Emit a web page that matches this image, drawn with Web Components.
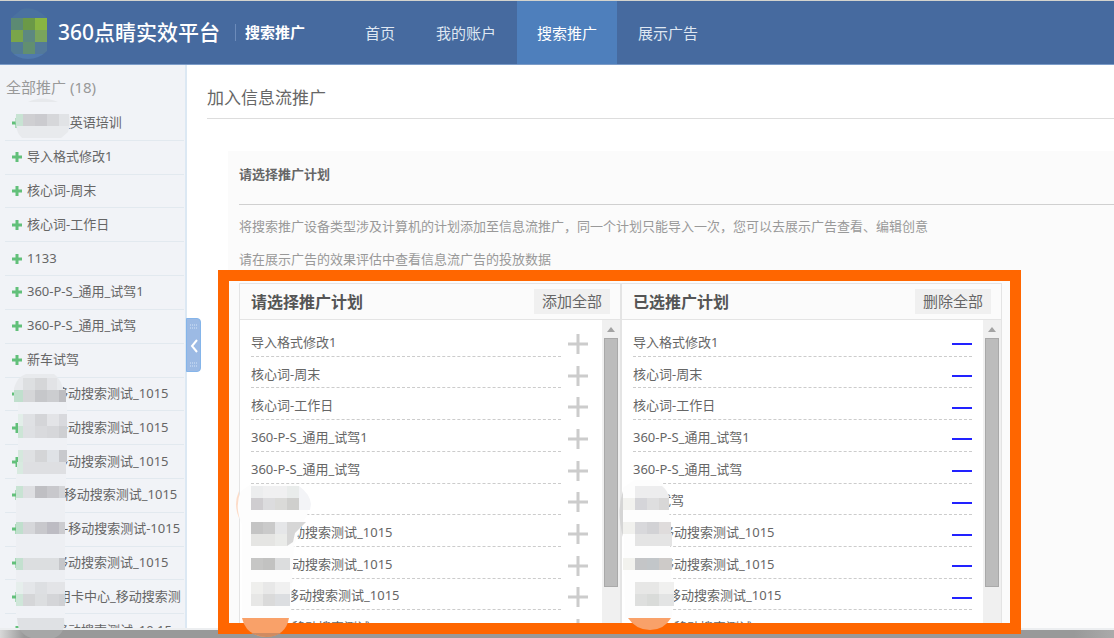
<!DOCTYPE html>
<html lang="zh-CN">
<head>
<meta charset="utf-8">
<title>360点睛实效平台</title>
<style>
html, body { margin: 0; height: 100%; }
body { font: 13px/20px "Noto Sans", "Noto Sans CJK SC", sans-serif; color: #666; overflow: hidden; }
</style>
</head>
<body>
<app-page>
  <top-bar slot="header">
    <nav-item>首页</nav-item>
    <nav-item>我的账户</nav-item>
    <nav-item active>搜索推广</nav-item>
    <nav-item>展示广告</nav-item>
  </top-bar>
  <side-bar slot="side" heading="全部推广 (18)">
    <plan-link style="--masked:37px">_英语培训</plan-link>
    <plan-link>导入格式修改1</plan-link>
    <plan-link>核心词-周末</plan-link>
    <plan-link>核心词-工作日</plan-link>
    <plan-link>1133</plan-link>
    <plan-link>360-P-S_通用_试驾1</plan-link>
    <plan-link>360-P-S_通用_试驾</plan-link>
    <plan-link>新车试驾</plan-link>
    <plan-link style="--masked:28px">移动搜索测试_1015</plan-link>
    <plan-link style="--masked:28px">移动搜索测试_1015</plan-link>
    <plan-link style="--masked:28px">移动搜索测试_1015</plan-link>
    <plan-link style="--masked:31px">_移动搜索测试_1015</plan-link>
    <plan-link style="--masked:37px">-移动搜索测试-1015</plan-link>
    <plan-link style="--masked:28px">移动搜索测试_1015</plan-link>
    <plan-link style="--masked:31px">用卡中心_移动搜索测</plan-link>
    <plan-link style="--masked:28px">移动搜索测试_10 15</plan-link>
  </side-bar>
  <feed-form>
    <plan-pane heading="请选择推广计划" action="添加全部">
      <plan-row>导入格式修改1</plan-row>
      <plan-row>核心词-周末</plan-row>
      <plan-row>核心词-工作日</plan-row>
      <plan-row>360-P-S_通用_试驾1</plan-row>
      <plan-row>360-P-S_通用_试驾</plan-row>
      <plan-row></plan-row>
      <plan-row style="--masked:28px">移动搜索测试_1015</plan-row>
      <plan-row style="--masked:28px">移动搜索测试_1015</plan-row>
      <plan-row style="--masked:35px">移动搜索测试_1015</plan-row>
      <plan-row style="--masked:41px">移动搜索测试_1015</plan-row>
    </plan-pane>
    <plan-pane heading="已选推广计划" action="删除全部">
      <plan-row chosen>导入格式修改1</plan-row>
      <plan-row chosen>核心词-周末</plan-row>
      <plan-row chosen>核心词-工作日</plan-row>
      <plan-row chosen>360-P-S_通用_试驾1</plan-row>
      <plan-row chosen>360-P-S_通用_试驾</plan-row>
      <plan-row chosen style="--masked:25px">试驾</plan-row>
      <plan-row chosen style="--masked:28px">移动搜索测试_1015</plan-row>
      <plan-row chosen style="--masked:28px">移动搜索测试_1015</plan-row>
      <plan-row chosen style="--masked:35px">移动搜索测试_1015</plan-row>
      <plan-row chosen style="--masked:41px">移动搜索测试_1015</plan-row>
    </plan-pane>
  </feed-form>
</app-page>

<script>
const define = (name, render) => customElements.define(name, class extends HTMLElement {
  constructor() {
    super();
    this.attachShadow({ mode: "open" });
  }
  connectedCallback() {
    this.shadowRoot.innerHTML = render(this);
  }
});

// Each block is "x y w h colour"; the svg they land in uses CSS pixels.
const blocks = list => list.trim().split(/\s*;\s*/).filter(Boolean).map(b => {
  const [x, y, w, h, c] = b.split(" ");
  return `<rect x="${x}" y="${y}" width="${w}" height="${h}" fill="${c}"/>`;
}).join("");

define("app-page", () => `
<style>
:host { display: flex; flex-direction: column; height: 100vh; background: linear-gradient(90deg, #d8d8d8, #999 24px, #999 calc(100% - 40px), #aaa); }
.window { flex: 1; min-height: 0; display: flex; flex-direction: column; margin-bottom: 8px; border-bottom: 2px solid #eceef0; border-top: 1px solid #d3d3cd; box-sizing: border-box; background: #fff; }
.body { flex: 1; min-height: 0; display: flex; }
main { flex: 1; min-width: 0; }
</style>
<div class="window"><slot name="header"></slot>
<div class="body"><slot name="side"></slot><main><slot></slot></main></div></div>`);

define("top-bar", () => `
<style>
:host { display: flex; align-items: center; height: 63px; flex: none; background: #466a9f; border-bottom: 1px solid #7c9cc8; color: #fff; }
.logo { flex: none; width: 48px; height: 55px; margin-left: 5px; }
h1 { margin: 0; padding-left: 5px; font-size: 21px; line-height: 29px; font-weight: 500; width: 182px; box-sizing: border-box; white-space: nowrap; }
.product { font-size: 15px; font-weight: 700; border-left: 1px solid #6c8bba; padding-left: 9px; line-height: 17px; width: 110px; box-sizing: border-box; white-space: nowrap; }
nav { display: flex; gap: 1px; align-self: stretch; }
</style>
<svg class="logo" viewBox="5 5 48 55" aria-hidden="true">
<defs><clipPath id="c"><path d="M11 5h36v46q-8 8-19 8t-17-8z"/></clipPath></defs>
<path d="M22 9q13-3 24 8v34q-8 7-18 7t-17-7V18z" fill="#4a719f"/>
<g clip-path="url(#c)">${blocks(`11 18 12 12 #5c8a73;23 18 12 12 #6b9947;35 18 12 12 #88b542;11 30 12 12 #7aa54a;23 30 12 12 #5d8880;35 30 12 12 #7aa45c;11 42 12 12 #527b95;23 42 12 12 #628f70;35 42 12 12 #53799a;11 54 36 5 #5079ad`)}</g></svg>
<h1>360点睛实效平台</h1>
<div class="product">搜索推广</div>
<nav><slot></slot></nav>`);

define("nav-item", () => `
<style>
:host { display: flex; }
a { display: flex; align-items: center; padding: 0 20px; font-size: 15px; color: #dfe7f2; text-decoration: none; white-space: nowrap; }
:host([active]) a { background: #4e7fbc; color: #fff; }
</style><a href="#"><slot></slot></a>`);

define("side-bar", el => `
<style>
:host { display: block; position: relative; flex: none; width: 187px; box-sizing: border-box; background: #f1f3f7; border-right: 2px solid #dce8f3; }
.clip { height: 100%; overflow: hidden; }
h2 { margin: 0; padding: 11px 0 9px 6px; font-size: 15px; line-height: 22px; font-weight: 400; color: #999; }
nav { display: grid; grid-auto-rows: 1fr; height: 541px; margin: 0 1px 0 5px; }
.mask { position: absolute; left: 0; top: 0; width: 80px; height: 573px; pointer-events: none; z-index: 2; }
button { position: absolute; left: 186px; top: 253px; width: 15px; height: 54px; padding: 0; border: 1px solid #85b5ea; border-radius: 0 4px 4px 0; background: #9cbae4; z-index: 3; }
button svg { display: block; }
</style>
<div class="clip"><h2>${el.getAttribute("heading")}</h2><nav><slot></slot></nav></div>
<svg class="mask" viewBox="0 65 80 573" aria-hidden="true">
<path d="M28 102q14-7 30 0z" fill="#e7e9ec"/>
<path d="M16 114h53q2 10-1 18l-7 6H22q-8-7-6-24z" fill="#e8eaed"/>
${blocks(`16 114 7 12 #c8e3d3;23 114 12 12 #cfcfd2;35 114 12 12 #cbcbcf;47 114 12 12 #d6d7da;59 114 10 12 #e1e3e6`)}
<path d="M14 393v-5q4-12 12-14h28q8 6 10 19z" fill="#e8eaed"/>
${blocks(`23 378 12 12 #dddfe1;35 378 12 12 #d5d6d8;47 378 10 12 #e2e3e6;14 390 9 12 #c0dfcd;23 390 12 12 #d5d6d8;35 390 12 12 #c6c7ca;47 390 12 12 #cccdd0;59 390 7 12 #bdbdc1;18 402 49 12 #eff1f5;
18 414 5 12 #e2eee9;23 414 12 12 #dfe1e4;35 414 12 12 #d4d5d8;47 414 12 12 #e3e4e7;59 414 8 12 #d8d9dd;18 426 5 12 #cce5d6;23 426 12 12 #dee0e3;35 426 12 12 #d9dadd;47 426 12 12 #d6d7da;59 426 8 12 #cecfd2;18 438 49 12 #eff1f5;
18 450 5 12 #d5e8dd;23 450 12 12 #dfe1e3;35 450 12 12 #d4d5d7;47 450 12 12 #dfe2e6;59 450 8 12 #c8c9cd;17 462 6 12 #d8eae0;23 462 43 12 #dedfe2;16 474 50 12 #eff1f5;
16 486 7 12 #c8e3d3;23 486 12 12 #dedfe2;35 486 12 12 #bfbfc3;47 486 12 12 #c8c8cc;59 486 6 12 #d4d5d8;16 498 49 24 #edeff3;
16 522 7 12 #c0dfcd;23 522 12 12 #d6d7da;35 522 12 12 #c8c8cc;47 522 12 12 #bdbcc3;59 522 6 12 #ccccd0;16 534 49 24 #edeff3;
16 558 7 12 #c3e0cf;23 558 36 12 #dcdee0;59 558 6 12 #c5c6c9;16 570 49 12 #edeff3;
16 582 7 12 #e6eeec;23 582 12 12 #e4e6e9;35 582 12 12 #dddfe2;47 582 18 12 #e3e4e7;16 594 7 12 #cfe6d9;23 594 12 12 #d5d6d8;35 594 12 12 #dcdee0;47 594 12 12 #d4d5d8;59 594 6 12 #cfd0d3;16 606 49 12 #f0f2f6`)}
<path d="M17 618h47q1 7-1 12H20q-3-6-3-12z" fill="#dfe1e4"/><path d="M20 630h43q-3 6-9 8H31q-8-3-11-8z" fill="#a6a7a7"/></svg>
<button aria-label="收起"><svg width="13" height="52"><path d="M10 21L5 27l5 6" fill="none" stroke="#fff" stroke-width="2"/><path d="M3 6h8M3 9h8M3 44h8M3 47h8" stroke="#d6e5f8" stroke-dasharray="1 1"/></svg></button>`);

define("plan-link", () => `
<style>
:host { display: flex; align-items: center; min-height: 0; border-bottom: 1px solid #e2e9ef; overflow: hidden; }
a { display: flex; align-items: center; gap: 5px; padding-left: 7px; color: inherit; text-decoration: none; white-space: nowrap; line-height: 20px; }
svg { flex: none; }
span { padding-left: var(--masked, 0); padding-bottom: 2px; }
</style>
<a href="#"><svg width="10" height="10" aria-hidden="true"><path d="M5 0v10M0 5h10" stroke="#62c07a" stroke-width="3"/></svg><span><slot></slot></span></a>`);

define("feed-form", () => `
<style>
:host { display: flex; flex-direction: column; height: 100%; position: relative; overflow: visible; box-sizing: border-box; padding-left: 20px; }
h1 { flex: none; margin: 0 0 32px; padding: 20px 0 8px; font-size: 17px; line-height: 25px; font-weight: 400; border-bottom: 1px solid #ddd; }
section { flex: 1; min-height: 0; margin-left: 21px; padding-left: 11px; background: #fbfbfb; overflow: hidden; }
h2 { margin: 0 0 11px; padding: 13px 0 20px; font-size: 13px; line-height: 20px; font-weight: 700; border-bottom: 1px solid #d0d0d0; }
p { margin: 0 0 13px; color: #999; white-space: nowrap; line-height: 20px; }
p + p { margin-bottom: 14px; }
.picker { display: grid; grid-template-columns: 382fr 379fr; max-width: 763px; border: 1px solid #e4e4e4; box-sizing: border-box; }
.frame { position: absolute; left: 31px; top: 205px; width: 803px; height: 364px; box-sizing: border-box; border: 11px solid #f60; pointer-events: none; }
.mask { position: absolute; left: 43px; top: 410px; width: 460px; height: 163px; pointer-events: none; }
</style>
<h1>加入信息流推广</h1>
<section>
<h2>请选择推广计划</h2>
<p>将搜索推广设备类型涉及计算机的计划添加至信息流推广，同一个计划只能导入一次，您可以去展示广告查看、编辑创意</p>
<p>请在展示广告的效果评估中查看信息流广告的投放数据</p>
<div class="picker"><slot></slot></div>
</section>
<div class="frame"></div>
<svg class="mask" viewBox="230 475 460 163" aria-hidden="true">
<path d="M239 491q-6 13 0 27z" fill="#fddcc8"/>
<path d="M251 484h45q20 22 8 36l-10 25-4 73h-48V525q-8-19-1-34z" fill="#fdfdfd"/>
<path d="M299 486q11 8 12 18l-1 6h-11z" fill="#f3f4f7"/>
${blocks(`251 486 12 12 #ecedee;263 486 24 12 #f0f0f1;287 486 12 12 #e9eceb;251 498 12 12 #cfcdd0;263 498 12 12 #dcdcde;275 498 12 12 #dadad8;287 498 12 12 #cfcfcd;
251 522 12 12 #c4c4c4;263 522 12 12 #cacaca;275 522 12 12 #e5e6e8;251 534 24 12 #e5e5e3;275 534 12 12 #eaebe9;
251 558 12 12 #c6c6c5;263 558 12 12 #c2c2c1;275 558 15 12 #dcddde;251 582 12 12 #efefed;263 582 12 12 #e8e8e8;275 582 15 12 #f0f0f0;251 594 12 12 #e7e7e6;263 594 12 12 #dadada;275 594 15 12 #dcdee1`)}
<path d="M287 522h19l-11 11-2 9-6 4z" fill="#d6d6d6"/>
<path d="M242 618h47q-3 18-23 19-20-1-24-19z" fill="#f9a169"/><path d="M251 633h30q-14 8-30 0z" fill="#cf8b62"/>
<path d="M623 491q-7 20 0 46z" fill="#d5d5d5"/>
<path d="M635 480h22q10 6 12 20l3 118h-47l-2-130z" fill="#fdfdfd"/>
<path d="M635 486h27q6 5 7 12h-34z" fill="#ededee"/>
${blocks(`623 498 12 12 #f2f2ef;635 498 12 12 #d5d5d9;647 498 12 12 #dededf;659 498 10 12 #d8d7d7;623 522 12 12 #f1f1ee;635 522 12 12 #d8d8db;647 522 12 12 #d2d2d5;659 522 12 12 #dfdcdc;635 534 37 12 #e4e4e4;
623 558 12 12 #f2f2ee;635 558 12 12 #c4c5c7;647 558 12 12 #c2c6c9;659 558 13 12 #cdcac8;635 582 24 12 #e7e7e6;659 582 15 12 #f0f0ef;635 594 12 12 #dedfde;647 594 12 12 #d9dbd9;659 594 15 12 #e3e4e4`)}
<path d="M628 618h43q-7 12-21 12t-22-12z" fill="#f9a169"/>
</svg>`);

define("plan-pane", el => `
<style>
:host { display: block; min-width: 0; border-right: 2px solid #e4e4e4; }
:host(:last-of-type) { border-right: 0; }
header { display: flex; align-items: center; justify-content: space-between; height: 35px; padding: 0 10px 0 11px; border-bottom: 1px solid #e4e4e4; }
h3 { margin: 0; font-size: 16px; line-height: 24px; font-weight: 700; color: #555; }
button { border: 0; margin: 0; padding: 0 8px; height: 25px; background: #f0f0f0; font: inherit; font-size: 15px; line-height: 25px; color: #666; }
.body { display: flex; background: #fff; }
.rows { flex: 1; min-width: 0; display: grid; grid-auto-rows: 1fr; height: 317px; padding: 5px 11px; }
.bar { width: 14px; padding: 0 2px; background: #f0f0f0; display: flex; flex-direction: column; }
.bar svg { display: block; }
.thumb { height: 249px; background: #bcbcbc; border: 1px solid #a9a9a9; box-sizing: border-box; }
</style>
<header><h3>${el.getAttribute("heading")}</h3><button>${el.getAttribute("action")}</button></header>
<div class="body"><div class="rows"><slot></slot></div>
<div class="bar"><svg width="14" height="18" aria-hidden="true"><path d="M3 12l4-5 4 5z" fill="#a3a3a3"/></svg><div class="thumb"></div></div></div>`);

define("plan-row", el => {
  const chosen = el.hasAttribute("chosen");
  return `
<style>
:host { display: flex; min-width: 0; gap: 7px; margin-right: 3px; }
:host([chosen]) { border-bottom: 1px dashed #ccc; margin-right: 0; }
span { flex: 1; display: flex; align-items: center; padding-left: var(--masked, 0); white-space: nowrap; padding-top: 3px; }
:host(:not([chosen])) span { border-bottom: 1px dashed #ccc; }
button { align-self: center; border: 0; padding: 6px 0 0; background: none; width: 20px; height: 26px; }
svg { display: block; }
</style>
<span><slot></slot></span>
<button aria-label="${chosen ? "删除" : "添加"}"><svg width="20" height="20" aria-hidden="true">${chosen
  ? '<path d="M0 11h20" stroke="#22f" stroke-width="2"/>'
  : '<path d="M0 10h20M10 0v20" stroke="#ccc" stroke-width="3"/>'}</svg></button>`;
});
</script>
</body>
</html>
